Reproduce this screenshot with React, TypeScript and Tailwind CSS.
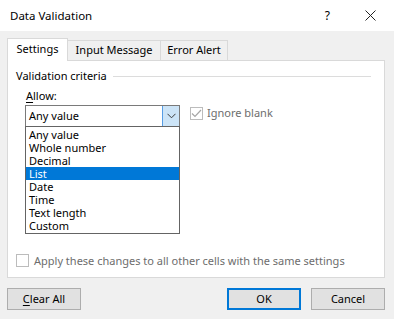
import React from "react";

const options = [
  "Any value",
  "Whole number",
  "Decimal",
  "List",
  "Date",
  "Time",
  "Text length",
  "Custom",
];

function Chevron() {
  return (
    <svg width="9" height="6" viewBox="0 0 9 6" fill="none">
      <path d="M0.5 0.8 L4.5 4.8 L8.5 0.8" stroke="#3c3c3c" strokeWidth="1" />
    </svg>
  );
}

function GrayCheck({ checked }: { checked?: boolean }) {
  return (
    <span className="flex h-[13px] w-[13px] shrink-0 items-center justify-center border border-[#bcbcbc] bg-white">
      {checked && (
        <svg width="11" height="9" viewBox="0 0 11 9" fill="none">
          <path d="M1 4.5 L4 7.5 L10 1" stroke="#a6a6a6" strokeWidth="1.2" />
        </svg>
      )}
    </span>
  );
}

function Button({ children, focused }: { children: React.ReactNode; focused?: boolean }) {
  return (
    <button
      className={`flex h-[22px] w-[74px] items-center justify-center bg-[#e1e1e1] text-[11px] text-black ${
        focused ? "border-2 border-[#0078d7]" : "border border-[#adadad]"
      }`}
    >
      {children}
    </button>
  );
}

export default function App() {
  return (
    <div
      className="h-[319px] w-[394px] overflow-hidden bg-[#f0f0f0] text-[11px] text-black"
      style={{ fontFamily: '"Noto Sans", "Open Sans", sans-serif' }}
    >
      {/* title bar */}
      <div className="flex h-[31px] items-center bg-white pl-[10px]">
        <span className="text-[11.5px]">Data Validation</span>
        <span className="ml-auto mr-[35px] text-[12px]">?</span>
        <svg className="mr-[18px]" width="11" height="11" viewBox="0 0 11 11" fill="none">
          <path d="M0.5 0.5 L10.5 10.5 M10.5 0.5 L0.5 10.5" stroke="#222" strokeWidth="1" />
        </svg>
      </div>

      <div className="px-[7px] pr-[9px]">
        {/* tabs */}
        <div className="flex h-[29px] items-end">
          <div className="relative z-10 -mb-px flex h-[23px] w-[61px] items-center justify-center border border-b-0 border-[#d9d9d9] bg-white pb-px">
            Settings
          </div>
          <div className="flex h-[20px] w-[93px] items-center justify-center border border-b-0 border-l-0 border-[#d9d9d9]">
            Input Message
          </div>
          <div className="flex h-[20px] w-[67px] items-center justify-center border border-b-0 border-l-0 border-[#d9d9d9]">
            Error Alert
          </div>
        </div>

        {/* panel */}
        <div className="flex h-[218px] flex-col border border-[#d9d9d9] bg-white px-[8px]">
          <div className="mt-[7px] flex h-[16px] items-center">
            <span>Validation criteria</span>
            <span className="ml-[6px] mr-[5px] h-px flex-1 bg-[#dcdcdc]" />
          </div>

          <div className="mt-[4px] pl-[10px] leading-[16px]">
            <span className="underline underline-offset-2">A</span>llow:
          </div>

          <div className="mt-[1px] flex pl-[9px]">
            <div className="relative">
              <div className="flex h-[22px] w-[155px] items-center border border-[#7a7a7a] bg-white">
                <span className="pl-[3px]">Any value</span>
                <span className="ml-auto flex h-full w-[17px] items-center justify-center border-l border-[#569de5] bg-[#cce4f7]">
                  <Chevron />
                </span>
              </div>
              {/* open drop-down list */}
              <div className="absolute left-0 top-[21px] z-20 w-[155px] border border-[#646464] bg-white py-px">
                {options.map((o) => (
                  <div
                    key={o}
                    className={`h-[13px] pl-[3px] leading-[13px] ${
                      o === "List" ? "bg-[#0078d7] text-white" : ""
                    }`}
                  >
                    {o}
                  </div>
                ))}
              </div>
            </div>

            <div className="ml-[10px] mt-[2px] flex h-[13px] items-center gap-[4px] text-[#6d6d6d]">
              <GrayCheck checked />
              <span>Ignore blank</span>
            </div>
          </div>

          <div className="mt-auto mb-[8px] flex items-center gap-[5px] text-[#6d6d6d]">
            <GrayCheck />
            <span>Apply these changes to all other cells with the same settings</span>
          </div>
        </div>

        {/* buttons */}
        <div className="mt-[10px] flex items-center">
          <Button>
            <span>
              <span className="underline underline-offset-2">C</span>lear All
            </span>
          </Button>
          <div className="ml-auto flex gap-[10px]">
            <Button focused>OK</Button>
            <Button>Cancel</Button>
          </div>
        </div>
      </div>
    </div>
  );
}
